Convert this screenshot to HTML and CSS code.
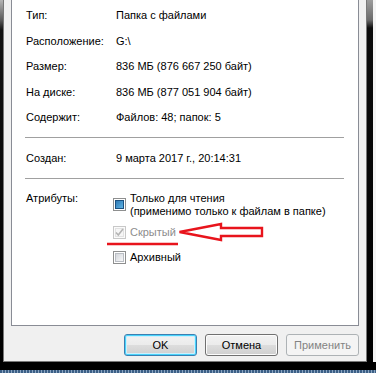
FILE: index.html
```html
<!DOCTYPE html>
<html>
<head>
<meta charset="UTF-8">
<title>Свойства: папка</title>
<link rel="stylesheet" href="styles.css">
</head>
<body>
<div class="screen">
  <div class="main">
    <div class="edge edge-left"></div>
    <div class="dialog">
      <div class="panel">
        <div class="props">
          <div class="prop"><span class="label">Тип:</span><span class="value">Папка с файлами</span></div>
          <div class="prop"><span class="label">Расположение:</span><span class="value">G:\</span></div>
          <div class="prop"><span class="label">Размер:</span><span class="value">836 МБ (876 667 250 байт)</span></div>
          <div class="prop"><span class="label">На диске:</span><span class="value">836 МБ (877 051 904 байт)</span></div>
          <div class="prop"><span class="label">Содержит:</span><span class="value">Файлов: 48; папок: 5</span></div>
        </div>
        <div class="sep"></div>
        <div class="prop created"><span class="label">Создан:</span><span class="value">9 марта 2017 г., 20:14:31</span></div>
        <div class="sep"></div>
        <div class="attrs">
          <div class="label">Атрибуты:</div>
          <div class="checks">
            <div class="check check-tall">
              <span class="box box-mixed"></span>
              <span class="check-text">Только для чтения<br>(применимо только к файлам в папке)</span>
            </div>
            <div class="check check-disabled">
              <span class="box box-checked">
                <svg width="11" height="11" viewBox="0 0 11 11"><path d="M2 5.5 L4.3 8 L9 2" fill="none" stroke="#b4b4b4" stroke-width="1.6"/></svg>
              </span>
              <span class="check-text">Скрытый</span>
            </div>
            <div class="check">
              <span class="box"></span>
              <span class="check-text">Архивный</span>
            </div>
          </div>
        </div>
      </div>
      <div class="buttons">
        <button class="btn btn-default">OK</button>
        <button class="btn">Отмена</button>
        <button class="btn" disabled>Применить</button>
      </div>
    </div>
    <div class="edge edge-right"></div>
  </div>
  <div class="bottom"></div>
  <div class="taskbar"></div>

  <!-- red marks drawn over the screenshot -->
  <svg class="marks" width="376" height="373" viewBox="0 0 376 373">
    <path d="M107 244 H178" stroke="#e8141c" stroke-width="2.5" fill="none"/>
    <path d="M179.5 232 L221 224 V228 H262 V236 H221 V240 Z" stroke="#e8141c" stroke-width="2.4" fill="none" stroke-linejoin="miter"/>
  </svg>
</div>
</body>
</html>
```

FILE: styles.css
```css
* {
  margin: 0;
  padding: 0;
  box-sizing: border-box;
}

body {
  background: #fff;
  font-family: "Liberation Sans", Arial, sans-serif;
  font-size: 11px;
  color: #000;
}

.screen {
  width: 376px;
  height: 373px;
  overflow: hidden;
  position: relative;
  display: flex;
  flex-direction: column;
}

.main {
  display: flex;
  height: 362px;
}

.edge-left {
  width: 3px;
  background: linear-gradient(#b4b4b4, #5a5a5a 20px, #111 30px, #000);
}

.edge-right {
  width: 9px;
  border-right: 3px solid #f4f4f4;
  background: linear-gradient(#9c9c9c, #6a6a6a 20px, #0c0c0c 28px, #000);
}

.dialog {
  width: 364px;
  background: #f0f0f0;
  border: 1px solid #787878;
  border-top: none;
  padding: 0 7px 5px;
  display: flex;
  flex-direction: column;
}

.panel {
  height: 326px;
  background: #fff;
  border: 1px solid #898c95;
  border-top: none;
  padding-top: 3px;
}

.prop {
  display: flex;
  height: 25.6px;
  line-height: 25.6px;
  padding-left: 14px;
  white-space: nowrap;
}

.label {
  width: 90px;
  flex-shrink: 0;
}

.sep {
  height: 1px;
  background: #a0a0a0;
  margin: 6px 14px 0 13px;
}

.created {
  margin-top: 8px;
}

.attrs {
  display: flex;
  margin-top: 13px;
  padding-left: 14px;
  line-height: 13px;
}

.attrs .label {
  width: 87px;
}

.checks {
  display: flex;
  flex-direction: column;
  gap: 5px;
}

.check {
  display: flex;
  align-items: center;
  gap: 4px;
  height: 20px;
  white-space: nowrap;
}

.check-tall {
  height: 26px;
}

.check-disabled {
  color: #8d8d8d;
}

.box {
  width: 13px;
  height: 13px;
  flex-shrink: 0;
  border: 1px solid #8e8f8f;
  background: #fff;
  padding: 1px;
  display: flex;
}

.box::after {
  content: "";
  flex: 1;
  border: 1px solid #b9bdc3;
  background: linear-gradient(135deg, #d4d7dc, #f7f7f8);
}

.box-mixed::after {
  border-color: #1c5180;
  background: linear-gradient(135deg, #2f7ab5, #5eb3e4);
}

.box-checked {
  border-color: #c8c8c8;
  background: #fbfbfb;
  position: relative;
}

.box-checked::after {
  border-color: #e2e2e2;
  background: #f6f6f6;
}

.box-checked svg {
  position: absolute;
  left: 0;
  top: 0;
}

.buttons {
  display: flex;
  justify-content: flex-end;
  gap: 8px;
  margin-top: 8px;
}

.btn {
  width: 73px;
  height: 22px;
  font-family: inherit;
  font-size: 11px;
  color: #000;
  border: 1px solid #707070;
  border-radius: 3px;
  box-shadow: inset 0 0 0 1px #fcfcfc;
  background: linear-gradient(#f2f2f2, #ebebeb 50%, #dddddd 50%, #cfcfcf);
}

.btn-default {
  border-color: #3c7fb1;
  box-shadow: inset 0 0 0 1px #48d3fb, inset 0 0 0 2px #cdeffd;
}

.btn:disabled {
  color: #838383;
  border-color: #adb2b5;
  box-shadow: none;
  background: #f4f4f4;
}

.bottom {
  height: 8px;
  background: #000;
}

.taskbar {
  height: 3px;
  background: repeating-linear-gradient(90deg, #3b5f86 0 2px, #8aa4c0 2px 3px);
}

.marks {
  position: absolute;
  left: 0;
  top: 0;
  pointer-events: none;
}
```
